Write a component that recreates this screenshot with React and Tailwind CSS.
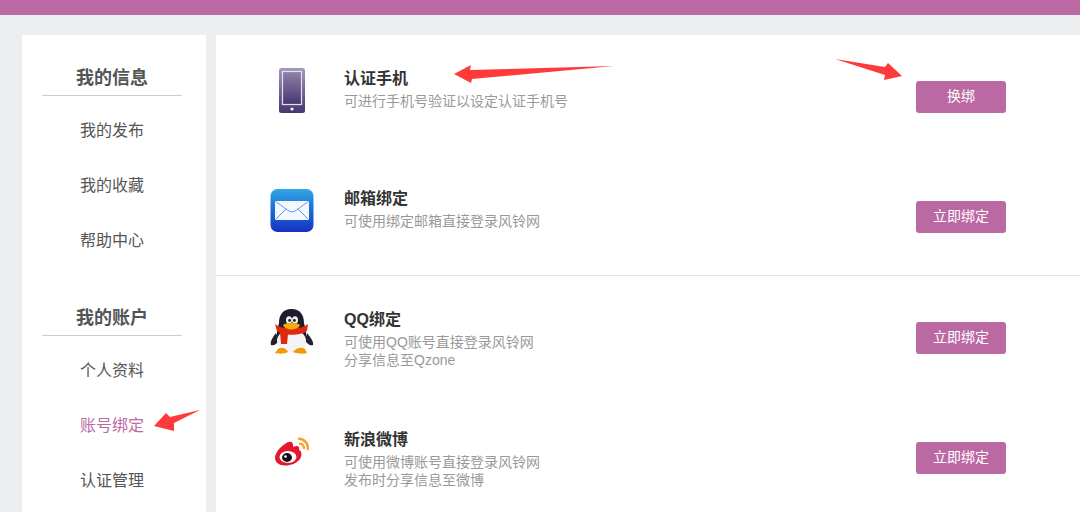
import React from 'react';

const PhoneIcon = () => (
  <svg width="26" height="45" viewBox="0 0 26 45">
    <defs>
      <linearGradient id="phoneBody" x1="0" y1="0" x2="0" y2="1">
        <stop offset="0" stopColor="#a398bd" />
        <stop offset="1" stopColor="#443670" />
      </linearGradient>
      <linearGradient id="phoneScreen" x1="0" y1="0" x2="0" y2="1">
        <stop offset="0" stopColor="#8f82a8" />
        <stop offset="1" stopColor="#453671" />
      </linearGradient>
    </defs>
    <rect x="0" y="0" width="26" height="45" rx="2.5" fill="url(#phoneBody)" />
    <rect x="3.5" y="3.5" width="19" height="33" fill="url(#phoneScreen)" stroke="#e4e0ec" strokeWidth="1.2" />
    <circle cx="13" cy="41" r="1.6" fill="#f1eef6" />
  </svg>
);

const MailIcon = () => (
  <svg width="44" height="43" viewBox="0 0 44 43">
    <defs>
      <linearGradient id="mailBg" x1="0" y1="0" x2="0" y2="1">
        <stop offset="0" stopColor="#35a6e6" />
        <stop offset="0.45" stopColor="#1a72d8" />
        <stop offset="1" stopColor="#1a2fc4" />
      </linearGradient>
    </defs>
    <rect x="0.5" y="0" width="43" height="43" rx="7" fill="url(#mailBg)" />
    <rect x="5" y="12" width="34" height="19" rx="1" fill="#f4f8fe" />
    <path d="M5.5 12.5 L19 22 Q22 24 25 22 L38.5 12.5 M5.5 30.5 L16 20 M38.5 30.5 L28 20" fill="none" stroke="#5a9fe6" strokeWidth="1" />
  </svg>
);

const QQIcon = () => (
  <svg width="44" height="46" viewBox="0 0 44 46">
    <path d="M6 24 C2 29 0 33 1 36 C4 37 7 35 9 31 Z M37 24 C41 29 44 33 43 36 C40 37 37 35 35 31 Z" fill="#23232f" />
    <path d="M21.5 0 C12 0 9 7 9 14 L7 22 L7 32 C9 44 34 44 36 32 L36 22 L34 14 C34 7 31 0 21.5 0 Z" fill="#1d1d2b" />
    <ellipse cx="21.5" cy="32" rx="14.5" ry="11.5" fill="#f4f4f6" />
    <ellipse cx="19" cy="11" rx="3" ry="3.8" fill="#f2f2f2" />
    <ellipse cx="25" cy="11" rx="3" ry="3.8" fill="#f2f2f2" />
    <circle cx="19.6" cy="11.4" r="1.4" fill="#111" />
    <circle cx="24.4" cy="11.4" r="1.4" fill="#111" />
    <path d="M5 15 C12 21 31 21 38 15 L37 22 C31 27 12 27 7 22 Z" fill="#e0280f" />
    <path d="M10 23 L18 25 L17 35 L11 35 Z" fill="#e0280f" />
    <path d="M13 16 C17 13 26 13 30 16 C28 22 15 22 13 16 Z" fill="#f4ab12" />
    <path d="M8 40 C12 37 17 40 18 43 C15 45 8 45 5 44 Z M35 40 C31 37 25 40 23 43 C27 45 34 45 37 44 Z" fill="#f09a0c" />
  </svg>
);

const WeiboIcon = () => (
  <svg width="34" height="30" viewBox="0 0 34 30">
    <path d="M10 7 C15 3 19 5 18 10 C22 8 25 9 24 13 C27 14 27 18 25.5 21 C23 26 16 28.5 10 28.5 C4 28.5 0 25 0 21 C0 16 5 10 10 7 Z" fill="#e6162d" />
    <ellipse cx="13" cy="20" rx="8.5" ry="6" fill="#ffffff" />
    <ellipse cx="12" cy="20.5" rx="5" ry="4.4" fill="#111111" />
    <circle cx="10.5" cy="19.5" r="1.3" fill="#ffffff" />
    <path d="M23 1.8 C29 1 34 7 32.6 13" fill="none" stroke="#f8a028" strokeWidth="2.4" />
    <path d="M24 6.8 C27 6 29.6 9 28.8 12" fill="none" stroke="#f8a028" strokeWidth="2.2" />
  </svg>
);

const BindRow = ({ icon, title, lines, action, iconTop, divided }) => (
  <div className={`flex h-[120px] shrink-0 items-start pl-[54px] pr-[74px] ${divided ? 'box-content border-b border-[#e5e5e5]' : ''}`}>
    <div className="flex w-[44px] shrink-0 justify-center" style={{ marginTop: iconTop }}>
      {icon}
    </div>
    <div className="ml-[30px] flex-1 pt-[32px]">
      <div className="text-[16px] font-bold leading-[24px] text-[#333333]">{title}</div>
      <div className="mt-[1px] text-[14px] leading-[18px] text-[#999999]">
        {lines.map((line) => (
          <div key={line}>{line}</div>
        ))}
      </div>
    </div>
    <button className="mt-[46px] h-[32px] w-[90px] rounded-[3px] bg-[#bb69a3] pb-[2px] text-[14px] text-white">{action}</button>
  </div>
);

const SideGroup = ({ title, items, active }) => (
  <div>
    <div className="mx-[20px] h-[33px] border-b border-[#cccccc] text-center text-[18px] font-bold leading-[30px] text-[#555555]">
      {title}
    </div>
    <div className="mt-[7px]">
      {items.map((item) => (
        <div
          key={item}
          className={`h-[55px] text-center text-[16px] leading-[55px] ${item === active ? 'text-[#bb69a3]' : 'text-[#555555]'}`}
        >
          {item}
        </div>
      ))}
    </div>
  </div>
);

export default function App() {
  return (
    <div className="relative flex h-[512px] w-[1080px] flex-col overflow-hidden bg-[#edeef0] font-['Liberation_Sans','Noto_Sans_CJK_SC',sans-serif]">
      <div className="h-[15px] shrink-0 bg-[#bb69a3]" />
      <div className="mt-[20px] flex min-h-0 flex-1 pl-[22px]">
        <div className="w-[184px] shrink-0 bg-white pr-[4px] pt-[28px]">
          <SideGroup title="我的信息" items={['我的发布', '我的收藏', '帮助中心']} />
          <div className="mt-[35px]">
            <SideGroup title="我的账户" items={['个人资料', '账号绑定', '认证管理']} active="账号绑定" />
          </div>
        </div>
        <div className="ml-[10px] flex flex-1 flex-col bg-white">
          <BindRow icon={<PhoneIcon />} iconTop={33} title="认证手机" lines={['可进行手机号验证以设定认证手机号']} action="换绑" />
          <BindRow icon={<MailIcon />} iconTop={34} title="邮箱绑定" lines={['可使用绑定邮箱直接登录风铃网']} action="立即绑定" divided />
          <BindRow icon={<QQIcon />} iconTop={33} title="QQ绑定" lines={['可使用QQ账号直接登录风铃网', '分享信息至Qzone']} action="立即绑定" />
          <BindRow icon={<WeiboIcon />} iconTop={41} title="新浪微博" lines={['可使用微博账号直接登录风铃网', '发布时分享信息至微博']} action="立即绑定" />
        </div>
      </div>
      {/* red annotation arrows drawn over the page */}
      <svg className="pointer-events-none absolute left-0 top-0" width="1080" height="512" viewBox="0 0 1080 512">
        <polygon points="454,74 471,65 470,70 614,66 472,79 471,83" fill="#ff3a3a" />
        <polygon points="835,59 885,67 888,63 902,76 884,80 885,75" fill="#ff3a3a" />
        <polygon points="154,426 166,413 170,417 200,410 174,423 174,431" fill="#ff3a3a" />
      </svg>
    </div>
  );
}
